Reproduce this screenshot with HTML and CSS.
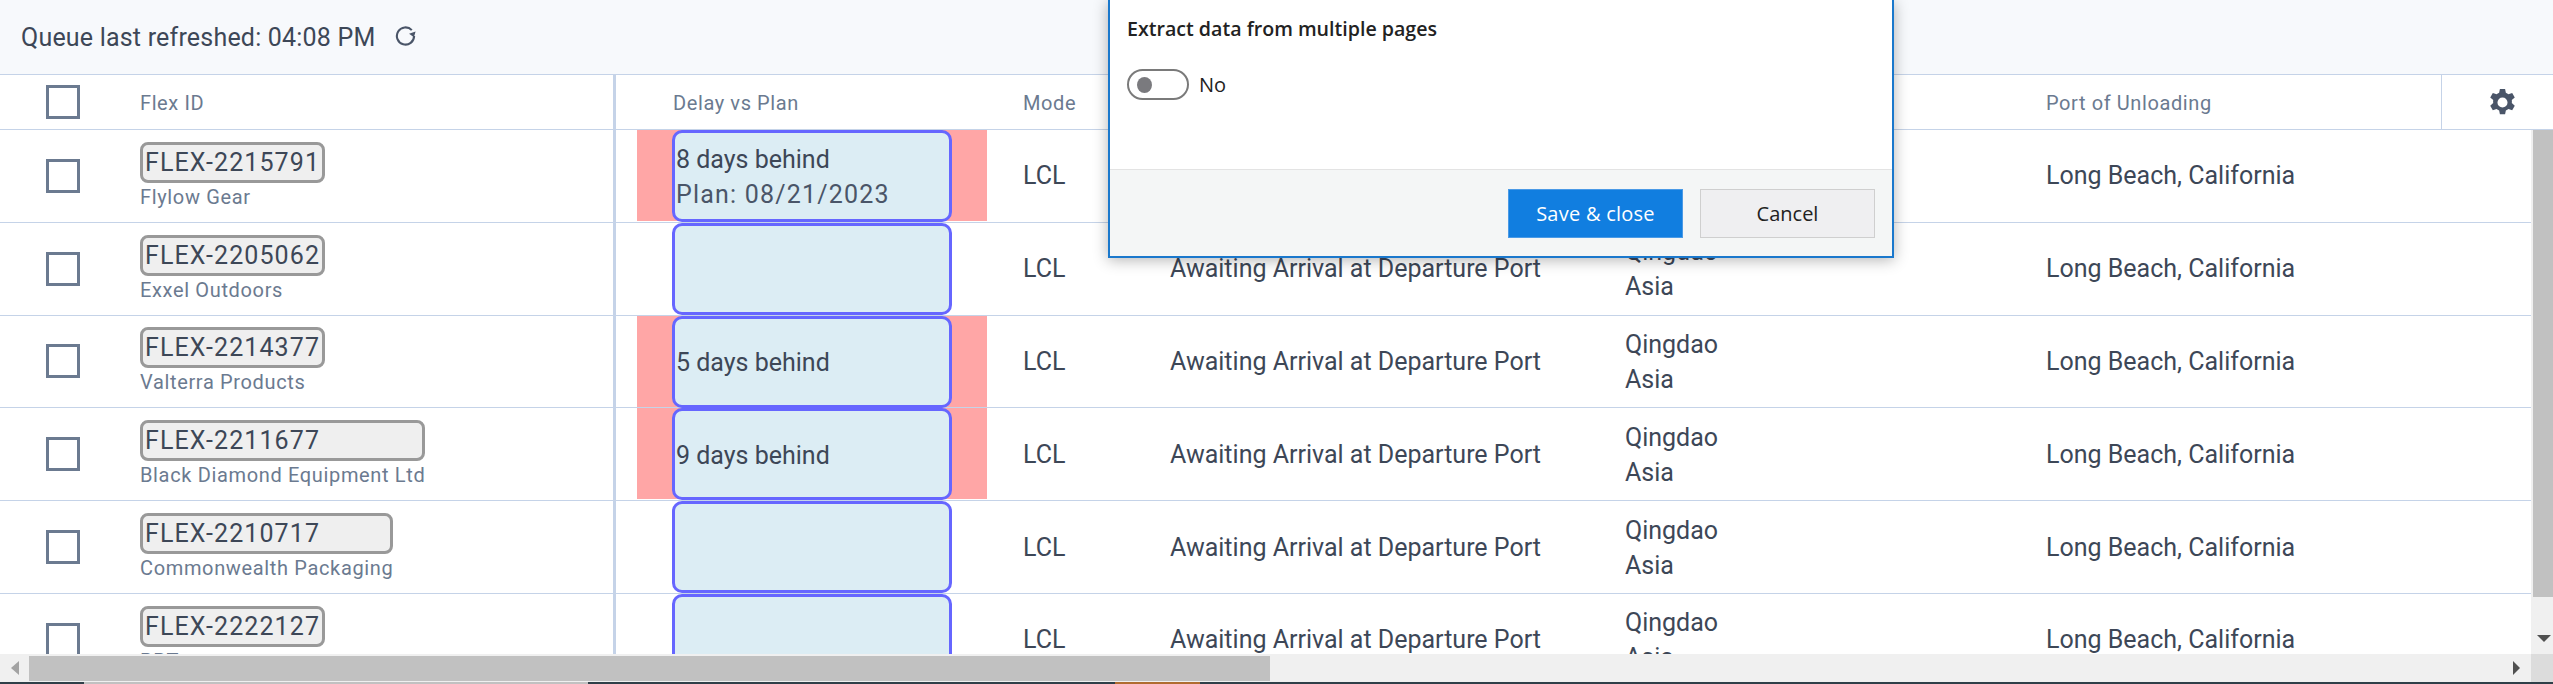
FILE: index.html
```html
<!DOCTYPE html>
<html lang="en">
<head>
  <meta charset="UTF-8">
  <title>Queue</title>
  <link rel="stylesheet" href="styles.css">
</head>
<body>
  <div class="topbar">
    <span class="refreshed">Queue last refreshed: 04:08 PM</span>
    <svg class="refresh" viewBox="0 0 20 20" width="21" height="21"><path d="M16 4.900A8.200 8.200 0 1 0 18.200 10.500" fill="none" stroke="#4a5568" stroke-width="2"/><path d="M19.600 6.300 18 11.600 13.400 8.400z" fill="#4a5568"/></svg>
  </div>

  <div class="head row-grid">
    <div class="col-fixed">
      <span class="check"></span>
      <span class="head-label">Flex ID</span>
    </div>
    <div class="head-label head-delay">Delay vs Plan</div>
    <div class="head-label">Mode</div>
    <div class="head-label"></div>
    <div class="head-label"></div>
    <div class="head-label">Port of Unloading</div>
    <div class="head-gear">
      <svg viewBox="0 0 24 24" width="31" height="31"><path fill="#4a5568" d="M10 1.500h4l.6 3a8 8 0 0 1 2 1.150l2.900-1 2 3.500-2.300 2a8 8 0 0 1 0 2.300l2.300 2-2 3.500-2.900-1a8 8 0 0 1-2 1.150l-.6 3h-4l-.6-3a8 8 0 0 1-2-1.150l-2.900 1-2-3.500 2.300-2a8 8 0 0 1 0-2.300l-2.300-2 2-3.500 2.900 1a8 8 0 0 1 2-1.150zM12 8.100a3.900 3.900 0 1 0 0 7.800 3.900 3.900 0 0 0 0-7.800z" fill-rule="evenodd"/></svg>
    </div>
  </div>

  <div class="table-body">
    <div class="rows">
      <div class="row row-grid">
        <div class="col-fixed">
          <span class="check"></span>
          <div class="flex-id"><div class="chip">FLEX-2215791</div><div class="company">Flylow Gear</div></div>
        </div>
        <div class="delay late"><div class="delay-box"><div>8 days behind</div><div class="plan">Plan: 08/21/2023</div></div></div>
        <div>LCL</div>
        <div>Awaiting Arrival at Departure Port</div>
        <div class="origin"><div>Qingdao</div><div>Asia</div></div>
        <div>Long Beach, California</div>
      </div>
      <div class="row row-grid">
        <div class="col-fixed">
          <span class="check"></span>
          <div class="flex-id"><div class="chip">FLEX-2205062</div><div class="company">Exxel Outdoors</div></div>
        </div>
        <div class="delay"><div class="delay-box"></div></div>
        <div>LCL</div>
        <div>Awaiting Arrival at Departure Port</div>
        <div class="origin"><div>Qingdao</div><div>Asia</div></div>
        <div>Long Beach, California</div>
      </div>
      <div class="row row-grid">
        <div class="col-fixed">
          <span class="check"></span>
          <div class="flex-id"><div class="chip">FLEX-2214377</div><div class="company">Valterra Products</div></div>
        </div>
        <div class="delay late"><div class="delay-box"><div>5 days behind</div></div></div>
        <div>LCL</div>
        <div>Awaiting Arrival at Departure Port</div>
        <div class="origin"><div>Qingdao</div><div>Asia</div></div>
        <div>Long Beach, California</div>
      </div>
      <div class="row row-grid">
        <div class="col-fixed">
          <span class="check"></span>
          <div class="flex-id"><div class="chip">FLEX-2211677</div><div class="company">Black Diamond Equipment Ltd</div></div>
        </div>
        <div class="delay late"><div class="delay-box"><div>9 days behind</div></div></div>
        <div>LCL</div>
        <div>Awaiting Arrival at Departure Port</div>
        <div class="origin"><div>Qingdao</div><div>Asia</div></div>
        <div>Long Beach, California</div>
      </div>
      <div class="row row-grid">
        <div class="col-fixed">
          <span class="check"></span>
          <div class="flex-id"><div class="chip">FLEX-2210717</div><div class="company">Commonwealth Packaging</div></div>
        </div>
        <div class="delay"><div class="delay-box"></div></div>
        <div>LCL</div>
        <div>Awaiting Arrival at Departure Port</div>
        <div class="origin"><div>Qingdao</div><div>Asia</div></div>
        <div>Long Beach, California</div>
      </div>
      <div class="row row-grid">
        <div class="col-fixed">
          <span class="check"></span>
          <div class="flex-id"><div class="chip">FLEX-2222127</div><div class="company">PPT</div></div>
        </div>
        <div class="delay"><div class="delay-box"></div></div>
        <div>LCL</div>
        <div>Awaiting Arrival at Departure Port</div>
        <div class="origin"><div>Qingdao</div><div>Asia</div></div>
        <div>Long Beach, California</div>
      </div>
    </div>
    <div class="vscroll">
      <div class="vthumb"></div>
      <div class="arrow-down"></div>
    </div>
  </div>

  <div class="hscroll">
    <div class="hbtn"><span class="arrow-left"></span></div>
    <div class="hthumb"></div>
    <div class="hbtn-right"><span class="arrow-right"></span></div>
    <div class="corner"></div>
  </div>
  <div class="taskbar">
    <div class="task-a"></div>
    <div class="task-b"></div>
    <div class="task-c"></div>
    <div class="task-d"></div>
    <div class="task-e"></div>
  </div>

  <div class="dialog">
    <div class="dialog-main">
      <div class="dialog-title">Extract data from multiple pages</div>
      <div class="toggle-line">
        <span class="toggle"><span class="knob"></span></span>
        <span>No</span>
      </div>
    </div>
    <div class="dialog-foot">
      <button class="btn btn-save">Save &amp; close</button>
      <button class="btn btn-cancel">Cancel</button>
    </div>
  </div>
</body>
</html>
```

FILE: styles.css
```css
html, body {
  margin: 0;
  height: 100%;
}
body {
  font-family: Roboto, "Liberation Sans", sans-serif;
  font-size: 25px;
  color: #3d4757;
  background: white;
  display: flex;
  flex-direction: column;
  height: 684px;
  overflow: hidden;
  position: relative;
}
.topbar {
  height: 74px;
  flex: none;
  background: #f7f9fc;
  border-bottom: 1px solid #c5d3e8;
  display: flex;
  align-items: center;
  padding-left: 21px;
  gap: 20px;
}
.refreshed {
  letter-spacing: 0.2px;
}
.refresh {
  margin-top: -4px;
}
.row-grid {
  display: grid;
  grid-template-columns: 616px 407px 147px 455px 421px 1fr;
  align-items: center;
}
.head {
  grid-template-columns: 616px 407px 147px 455px 421px 395px 1fr;
  height: 54px;
  flex: none;
  border-bottom: 1px solid #c5d3e8;
}
.head-label {
  font-size: 20px;
  letter-spacing: 0.6px;
  color: #6b7a90;
  padding-top: 2px;
}
.head-delay {
  padding-left: 57px;
}
.head-gear {
  height: 100%;
  border-left: 1px solid #c5d3e8;
  padding-left: 10px;
  display: flex;
  align-items: center;
  justify-content: center;
}
.col-fixed {
  display: flex;
  align-items: center;
  height: 100%;
  box-sizing: border-box;
  border-right: 3px solid #c5d3e8;
  padding-left: 46px;
}
.check {
  width: 34px;
  height: 34px;
  flex: none;
  box-sizing: border-box;
  border: 3px solid #6b7a90;
  margin-right: 60px;
}
.table-body {
  flex: 1;
  min-height: 0;
  display: flex;
  overflow: hidden;
}
.rows {
  flex: 1;
  min-width: 0;
}
.row {
  height: 92.8px;
  box-sizing: border-box;
  border-bottom: 1px solid #c5d3e8;
  grid-template-rows: 91.8px;
}
.flex-id {
  display: inline-flex;
  flex-direction: column;
  margin-top: 1px;
}
.chip {
  box-sizing: border-box;
  height: 41px;
  line-height: 35px;
  padding: 0 2px;
  background: #efefef;
  border: 3px solid #999;
  border-radius: 8px;
  letter-spacing: 1.1px;
}
.company {
  font-size: 20px;
  letter-spacing: 0.65px;
  color: #6b7a90;
  line-height: 28px;
}
.delay {
  margin-left: 21px;
  width: 350px;
  height: 91px;
  align-self: start;
  box-sizing: border-box;
  padding: 0 35px;
}
.late {
  background: #ffa6a6;
}
.delay-box {
  height: 92px;
  box-sizing: border-box;
  background: #dcedf4;
  border: 3px solid #6666ff;
  border-radius: 10px;
  padding: 2px 0 0 1px;
  display: flex;
  flex-direction: column;
  justify-content: center;
  line-height: 35px;
}
.plan {
  color: #4a5568;
  letter-spacing: 1.2px;
}
.origin {
  line-height: 35px;
  padding-top: 1px;
}
.vscroll {
  width: 22px;
  flex: none;
  background: #f0f0f0;
  display: flex;
  flex-direction: column;
  align-items: flex-end;
}
.vthumb {
  width: 20px;
  height: 467px;
  background: #c1c1c1;
}
.arrow-down {
  margin: 38px 2px 0 0;
  width: 0;
  height: 0;
  border-left: 7px solid transparent;
  border-right: 7px solid transparent;
  border-top: 7px solid #505050;
}
.hscroll {
  height: 28px;
  flex: none;
  background: #f0f0f0;
  display: flex;
  align-items: center;
}
.hbtn {
  width: 29px;
  flex: none;
  display: flex;
  padding-left: 11px;
  box-sizing: border-box;
}
.arrow-left {
  width: 0;
  height: 0;
  border-top: 7px solid transparent;
  border-bottom: 7px solid transparent;
  border-right: 8px solid #a3a3a3;
}
.hthumb {
  width: 1241px;
  height: 25px;
  background: #c1c1c1;
  margin-top: 1px;
}
.hbtn-right {
  flex: 1;
  display: flex;
  justify-content: flex-end;
  padding-right: 11px;
}
.arrow-right {
  width: 0;
  height: 0;
  border-top: 7px solid transparent;
  border-bottom: 7px solid transparent;
  border-left: 7px solid #505050;
}
.corner {
  width: 22px;
  height: 100%;
  flex: none;
  background: #dcdcdc;
}
.taskbar {
  height: 2px;
  flex: none;
  display: grid;
  grid-template-columns: 84px 504px 527px 85px 1fr;
}
.task-a, .task-c, .task-e {
  background: #2f3f48;
}
.task-b {
  background: #c1c1c1;
}
.task-d {
  background: #b06c30;
}
.dialog {
  position: absolute;
  left: 1108px;
  top: 0;
  width: 786px;
  height: 258px;
  box-sizing: border-box;
  border: 2px solid #1a78cc;
  border-top: none;
  background: white;
  box-shadow: 0 2px 14px rgba(0,0,0,0.3);
  display: flex;
  flex-direction: column;
  font-family: "Open Sans", "Noto Sans", sans-serif;
  color: #222;
}
.dialog-main {
  height: 170px;
  flex: none;
  box-sizing: border-box;
  padding: 17px 0 0 17px;
  border-bottom: 1px solid #e3e3e3;
}
.dialog-title {
  font-size: 19.6px;
  font-weight: 600;
  line-height: 24px;
}
.toggle-line {
  display: flex;
  align-items: center;
  gap: 10px;
  margin-top: 28px;
  font-size: 20px;
}
.toggle {
  width: 62px;
  height: 31px;
  box-sizing: border-box;
  border: 2px solid #7a7a7a;
  border-radius: 16px;
  display: flex;
  align-items: center;
  padding-left: 8px;
}
.knob {
  width: 15px;
  height: 16px;
  border-radius: 50%;
  background: #7a7a7e;
}
.dialog-foot {
  flex: 1;
  background: #f4f6f6;
  display: flex;
  justify-content: flex-end;
  gap: 17px;
  padding: 19px 17px 0 0;
  box-sizing: border-box;
}
.btn {
  width: 175px;
  height: 49px;
  font-family: inherit;
  font-size: 20px;
  box-sizing: border-box;
}
.btn-save {
  background: #117ee0;
  border: 1px solid #4a9ae6;
  color: white;
  letter-spacing: 0.25px;
}
.btn-cancel {
  background: #efeff1;
  border: 1px solid #cfcfcf;
  color: #222;
}
```
